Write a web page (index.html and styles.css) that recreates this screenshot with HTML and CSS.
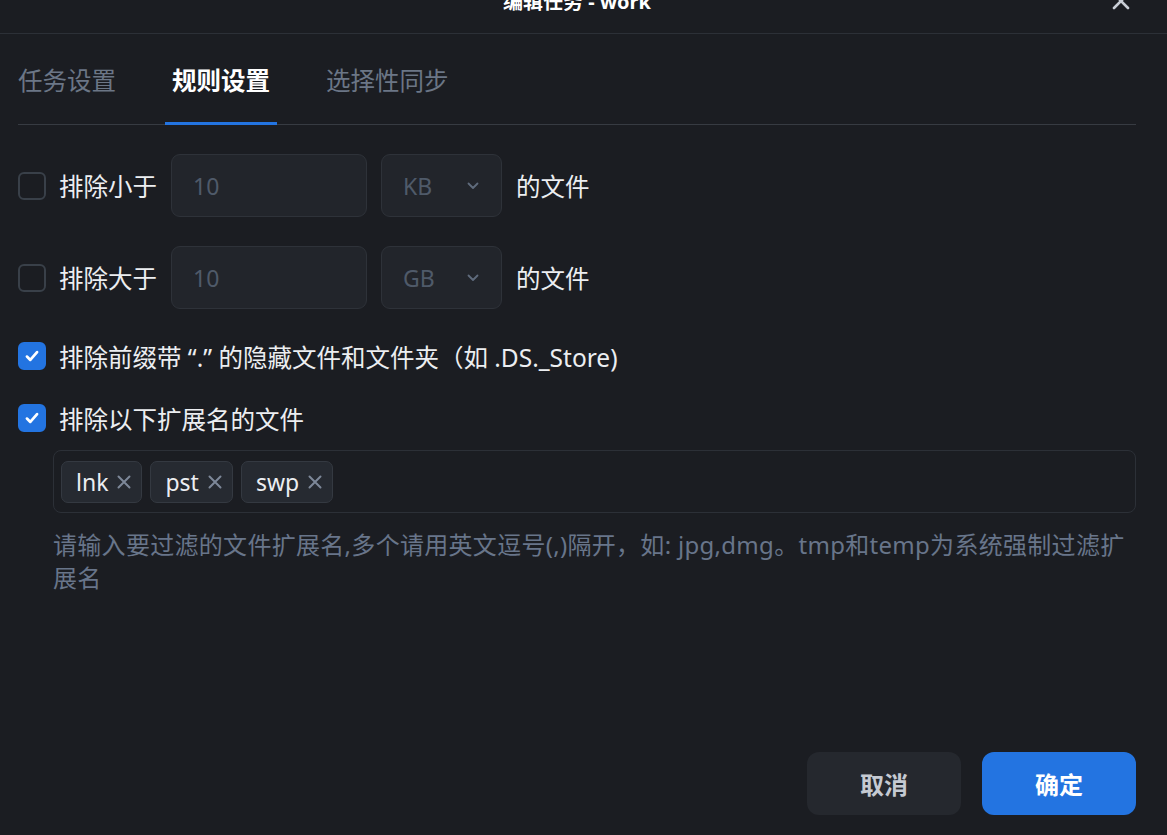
FILE: index.html
```html
<!DOCTYPE html>
<html lang="zh-CN">
<head>
  <meta charset="UTF-8" />
  <meta name="viewport" content="width=device-width,initial-scale=1" />
  <title>编辑任务 - work</title>
  <link rel="stylesheet" href="styles.css">
</head>
<body>
  <div class="dialog">
    <!-- Header (partly scrolled out of view) -->
    <header class="dialog-header">
      <h2 class="dialog-title">编辑任务 - work</h2>
      <button class="close-btn" aria-label="关闭">
        <svg viewBox="0 0 20 20" width="20" height="20">
          <path d="M3 3 L17 17 M17 3 L3 17" />
        </svg>
      </button>
    </header>

    <div class="dialog-body">
      <!-- Tabs -->
      <nav class="tabs">
        <div class="tab">任务设置</div>
        <div class="tab active">规则设置</div>
        <div class="tab">选择性同步</div>
      </nav>

      <div class="rules">
        <div class="rule-row size-row">
          <span class="checkbox"></span>
          <span class="label">排除小于</span>
          <div class="input">10</div>
          <div class="select">
            <span>KB</span>
            <svg class="chevron" viewBox="0 0 12 8"><path d="M1.5 1.5 L6 6 L10.5 1.5" /></svg>
          </div>
          <span class="label">的文件</span>
        </div>

        <div class="rule-row size-row">
          <span class="checkbox"></span>
          <span class="label">排除大于</span>
          <div class="input">10</div>
          <div class="select">
            <span>GB</span>
            <svg class="chevron" viewBox="0 0 12 8"><path d="M1.5 1.5 L6 6 L10.5 1.5" /></svg>
          </div>
          <span class="label">的文件</span>
        </div>

        <div class="rule-row check-row hidden-row">
          <span class="checkbox checked">
            <svg viewBox="0 0 16 16"><path d="M3.5 8.5 L6.5 11.5 L12.5 4.5" /></svg>
          </span>
          <span class="label">排除前缀带 “.” 的隐藏文件和文件夹（如 .DS._Store)</span>
        </div>

        <div class="rule-row check-row ext-row">
          <span class="checkbox checked">
            <svg viewBox="0 0 16 16"><path d="M3.5 8.5 L6.5 11.5 L12.5 4.5" /></svg>
          </span>
          <span class="label">排除以下扩展名的文件</span>
        </div>

        <div class="ext-block">
          <div class="tag-input">
            <span class="tag">lnk<svg viewBox="0 0 16 16"><path d="M2.5 2.5 L13.5 13.5 M13.5 2.5 L2.5 13.5" /></svg></span>
            <span class="tag">pst<svg viewBox="0 0 16 16"><path d="M2.5 2.5 L13.5 13.5 M13.5 2.5 L2.5 13.5" /></svg></span>
            <span class="tag">swp<svg viewBox="0 0 16 16"><path d="M2.5 2.5 L13.5 13.5 M13.5 2.5 L2.5 13.5" /></svg></span>
          </div>
          <p class="hint">请输入要过滤的文件扩展名,多个请用英文逗号(,)隔开，如: jpg,dmg。tmp和temp为系统强制过滤扩展名</p>
        </div>
      </div>

      <footer class="dialog-footer">
        <button class="btn btn-cancel">取消</button>
        <button class="btn btn-primary">确定</button>
      </footer>
    </div>
  </div>
</body>
</html>
```

FILE: styles.css
```css
* {
  margin: 0;
  padding: 0;
  box-sizing: border-box;
  font-family: 'Noto Sans', 'Noto Sans CJK SC', sans-serif;
}

body {
  background: #1b1d22;
  color: #e8eaed;
  height: 835px;
  overflow: hidden;
}

.dialog {
  display: flex;
  flex-direction: column;
  height: 868px;
  margin-top: -33px; /* header is scrolled half out of view */
}

.dialog-header {
  position: relative;
  height: 67px;
  border-bottom: 1px solid #2c3037;
  display: flex;
  align-items: center;
  justify-content: center;
  padding: 0 31px 0 18px;
}

.dialog-title {
  font-size: 20px;
  font-weight: 700;
  color: #fff;
}

.close-btn {
  position: absolute;
  right: 36px;
  top: 24px;
  background: none;
  border: none;
  width: 20px;
  height: 20px;
  cursor: pointer;
}

.close-btn svg path {
  stroke: #c9ced6;
  stroke-width: 2.6;
  stroke-linecap: round;
  fill: none;
}

.dialog-body {
  flex: 1;
  display: flex;
  flex-direction: column;
  padding: 0 31px 20px 18px;
}

/* tabs */
.tabs {
  display: flex;
  gap: 42px;
  border-bottom: 1px solid #373b42;
}

.tab {
  height: 91px;
  padding: 2px 7px 0;
  display: flex;
  align-items: center;
  font-size: 24.5px;
  color: #6b7686;
  border-bottom: 3px solid transparent;
  margin-bottom: -1px;
}

.tab:first-child {
  margin-left: -7px;
}

.tab.active {
  color: #fff;
  font-weight: 700;
  border-bottom-color: #2374e1;
}

/* rules */
.rules {
  flex: 1;
  display: flex;
  flex-direction: column;
}

.rule-row {
  display: flex;
  align-items: center;
  gap: 14px;
}

.size-row {
  height: 63px;
  margin-top: 29px;
}

.check-row {
  height: 36px;
}

.hidden-row {
  margin-top: 29px;
}

.ext-row {
  margin-top: 26px;
}

.checkbox {
  width: 28px;
  height: 28px;
  flex-shrink: 0;
  border: 2px solid #394049;
  border-radius: 6px;
  margin-right: -1px;
  display: flex;
  align-items: center;
  justify-content: center;
}

.checkbox.checked {
  background: #2374e1;
  border-color: #2374e1;
}

.checkbox svg {
  width: 18px;
  height: 18px;
}

.checkbox svg path {
  stroke: #fff;
  stroke-width: 2.4;
  stroke-linecap: round;
  stroke-linejoin: round;
  fill: none;
}

.label {
  font-size: 24.5px;
  color: #eceef1;
  white-space: nowrap;
}

.input,
.select {
  height: 63px;
  background: #22252b;
  border: 1px solid #2e3239;
  border-radius: 9px;
  display: flex;
  align-items: center;
  padding-left: 21px;
  font-size: 23px;
  color: #4f5a69;
}

.input {
  width: 196px;
}

.select {
  width: 121px;
  justify-content: space-between;
  padding-right: 22px;
}

.chevron {
  width: 12px;
  height: 8px;
}

.chevron path {
  stroke: #5f6b7c;
  stroke-width: 1.8;
  fill: none;
  stroke-linecap: round;
  stroke-linejoin: round;
}

/* extension tags */
.ext-block {
  padding-left: 35px;
  margin-top: 14px;
}

.tag-input {
  height: 63px;
  border: 1px solid #2c3037;
  border-radius: 8px;
  display: flex;
  align-items: center;
  gap: 8px;
  padding: 0 7px;
}

.tag {
  height: 42px;
  display: flex;
  align-items: center;
  gap: 8px;
  padding: 0 9px 0 14px;
  background: #262a31;
  border: 1px solid #343941;
  border-radius: 7px;
  font-size: 23px;
  color: #eceef1;
}

.tag svg {
  width: 16px;
  height: 16px;
}

.tag svg path {
  stroke: #7d8899;
  stroke-width: 2;
  stroke-linecap: round;
  fill: none;
}

.hint {
  margin-top: 15px;
  font-size: 24px;
  letter-spacing: 0.3px;
  line-height: 33px;
  color: #68758a;
}

/* footer */
.dialog-footer {
  display: flex;
  justify-content: flex-end;
  gap: 21px;
}

.btn {
  width: 154px;
  height: 63px;
  border: none;
  border-radius: 12px;
  font-size: 24px;
  font-weight: 700;
  cursor: pointer;
}

.btn-cancel {
  background: #25282e;
  color: #c5cad2;
}

.btn-primary {
  background: #2374e1;
  color: #fff;
}
```
